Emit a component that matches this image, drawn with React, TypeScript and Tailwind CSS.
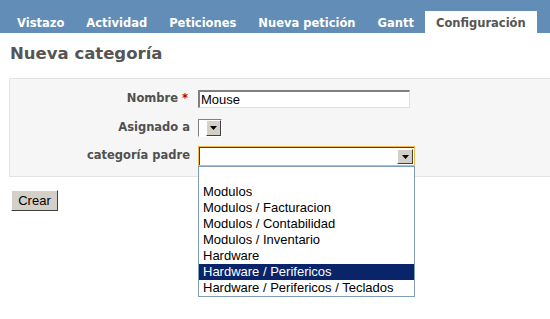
const tabs = ['Vistazo', 'Actividad', 'Peticiones', 'Nueva petición', 'Gantt', 'Configuración'];

const options = [
  '',
  'Modulos',
  'Modulos / Facturacion',
  'Modulos / Contabilidad',
  'Modulos / Inventario',
  'Hardware',
  'Hardware / Perifericos',
  'Hardware / Perifericos / Teclados',
];

function Arrow() {
  return (
    <span className="flex h-full w-[16px] items-center justify-center border-t border-l border-r border-b border-t-white border-l-white border-r-[#404040] border-b-[#404040] bg-[#d4d0c8]">
      <svg width="7" height="4" viewBox="0 0 7 4">
        <path d="M0 0h7L3.5 4z" fill="#000" />
      </svg>
    </span>
  );
}

export default function App() {
  const selected = 'Hardware / Perifericos';

  return (
    <div className="h-[319px] w-[550px] overflow-hidden bg-white font-['DejaVu_Sans',sans-serif] text-[#505050]">
      <nav className="flex h-[33px] items-end bg-[#628db6] pl-[6px]">
        {tabs.map((tab) => (
          <span
            key={tab}
            className={
              'flex h-[22px] shrink-0 items-center px-[11px] pt-[3px] text-[11.5px] font-bold whitespace-nowrap ' +
              (tab === 'Configuración' ? 'bg-white text-[#555]' : 'text-white')
            }
          >
            {tab}
          </span>
        ))}
      </nav>

      <div className="pl-[9px]">
        <h2 className="pt-[9px] pl-[1px] text-[16.5px] leading-[24px] font-bold text-[#555]">Nueva categoría</h2>

        <div className="mt-[12px] h-[99px] border border-r-0 border-[#e4e4e4] bg-[#f6f6f6] pt-[11px]">
          <div className="flex h-[18px] items-center">
            <label className="w-[180px] pr-[2px] text-right text-[11.5px] font-bold">
              Nombre <span className="text-[#bb0000]">*</span>
            </label>
            <div className="ml-[8px] flex h-[18px] w-[212px] items-center border-t-2 border-l-2 border-b border-r border-t-[#808080] border-l-[#808080] border-b-[#e0e0e0] border-r-[#e0e0e0] bg-white pl-[1px] font-['Liberation_Sans',sans-serif] text-[13px] text-black">
              Mouse
            </div>
          </div>

          <div className="mt-[11px] flex h-[18px] items-center">
            <label className="w-[188px] pr-[8px] text-right text-[11.5px] font-bold">Asignado a</label>
            <div className="flex h-[18px] w-[24px] items-stretch border-t border-l border-b border-r border-t-[#808080] border-l-[#808080] border-b-white border-r-white bg-white pl-[7px]">
              <Arrow />
            </div>
          </div>

          <div className="mt-[9px] flex h-[20px] items-center">
            <label className="w-[188px] pr-[8px] text-right text-[11.5px] font-bold">categoría padre</label>
            <div className="relative h-[20px] w-[217px]">
              <div className="flex h-[20px] items-stretch justify-end border border-[#f0b848] bg-white">
                <div className="flex flex-1 items-stretch justify-end border-t border-l border-t-[#404040] border-l-[#404040] p-[1px]">
                  <Arrow />
                </div>
              </div>
              <ul className="absolute top-[20px] left-0 z-10 w-[217px] border border-[#7f9db9] bg-white font-['Liberation_Sans',sans-serif] text-[13px] text-black">
                {options.map((o, i) => (
                  <li
                    key={i}
                    className={
                      (i === 0 ? 'h-[17px] ' : 'h-[16px] ') +
                      'px-[4px] leading-[16px] ' +
                      (o === selected ? 'bg-[#0a246a] text-white' : '')
                    }
                  >
                    {o}
                  </li>
                ))}
              </ul>
            </div>
          </div>
        </div>

        <button className="mt-[13px] ml-[2px] flex h-[21px] w-[47px] items-center justify-center border border-t-white border-l-white border-r-[#404040] border-b-[#404040] bg-[#d4d0c8] font-['Liberation_Sans',sans-serif] text-[13px] text-black">
          Crear
        </button>
      </div>
    </div>
  );
}
